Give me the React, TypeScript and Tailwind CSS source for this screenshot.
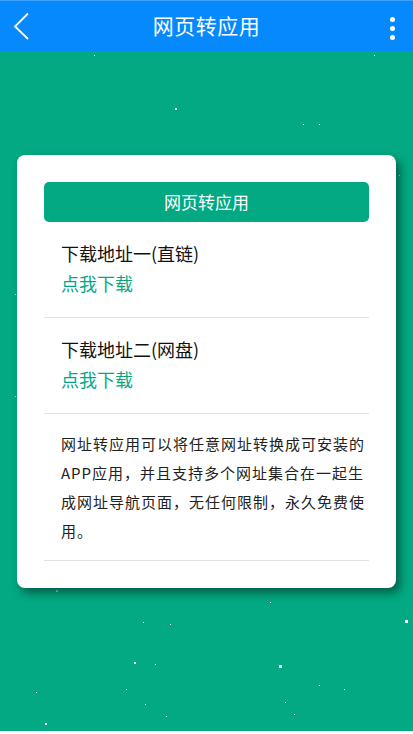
import React from 'react';

const font = { fontFamily: '"Noto Sans CJK SC", "Noto Sans", sans-serif' };

// background specks: [x, y, size, opacity]
const stars: [number, number, number, number][] = [
  [94, 55, 1, 1], [374, 55, 1, 1], [175, 108, 2, 1], [303, 124, 1, 1], [319, 124, 1, 1],
  [399, 175, 1, 0.6], [15, 294, 1, 0.7], [15, 396, 1, 0.7],
  [56, 590, 2, 0.5], [270, 602, 1, 1], [143, 622, 1, 1], [170, 624, 1, 1], [405, 620, 3, 1],
  [134, 662, 2, 1], [155, 664, 1, 1], [279, 665, 3, 1], [36, 692, 1, 1], [126, 689, 1, 1],
  [319, 685, 1, 1], [344, 689, 1, 1], [145, 704, 1, 1], [285, 702, 1, 1], [166, 716, 1, 1],
  [294, 714, 1, 1], [45, 723, 2, 1],
];

function Header() {
  return (
    <div className="relative flex h-[51px] items-center justify-center bg-[#0589fd] border-t border-t-[#3ea2ff]">
      <button className="absolute left-[12px] top-[11px] p-0">
        <svg width="20" height="30" viewBox="0 0 20 30">
          <path d="M16 1.5 L3 14.5 L16 27" fill="none" stroke="#fff" strokeWidth="1.8" />
        </svg>
      </button>
      <h1 className="text-[21px] text-white tracking-[0.5px]">网页转应用</h1>
      <div className="absolute right-[18px] top-[16px] flex flex-col gap-[4px]">
        <span className="block h-[5px] w-[5px] rounded-full bg-white" />
        <span className="block h-[5px] w-[5px] rounded-full bg-white" />
        <span className="block h-[5px] w-[5px] rounded-full bg-white" />
      </div>
    </div>
  );
}

function DownloadItem({ title }: { title: string }) {
  return (
    <div className="border-b border-[#e2e2e2] px-[17px] pt-4 pb-[19px]">
      <div className="text-[18px] leading-[30px] text-[#111]">{title}</div>
      <a className="block text-[18px] leading-[30px] text-[#06a884]">点我下载</a>
    </div>
  );
}

export default function App() {
  return (
    <div className="h-[734px] w-[413px] overflow-hidden bg-white" style={font}>
      <Header />
      <div className="relative h-[680px] bg-[#02a982] pt-[104px]">
        {stars.map(([x, y, s, o], i) => (
          <span
            key={i}
            className="absolute bg-white"
            style={{ left: x, top: y - 51, width: s, height: s, opacity: o }}
          />
        ))}
        <div className="relative mx-[17px] rounded-[8px] bg-white px-[27px] pt-[27px] pb-[27px] shadow-[4px_5px_10px_rgba(0,0,0,0.45)]">
          <button className="flex h-[40px] w-full items-center justify-center rounded-[5px] bg-[#02a982] text-[17px] text-white">
            网页转应用
          </button>
          <DownloadItem title="下载地址一(直链)" />
          <DownloadItem title="下载地址二(网盘)" />
          <div className="border-b border-[#e2e2e2] py-[15px] pl-[17px]">
            <p className="w-[306px] text-[15px] leading-[29px] tracking-[1px] text-[#222]">
              网址转应用可以将任意网址转换成可安装的APP应用，并且支持多个网址集合在一起生成网址导航页面，无任何限制，永久免费使用。
            </p>
          </div>
        </div>
      </div>
    </div>
  );
}
